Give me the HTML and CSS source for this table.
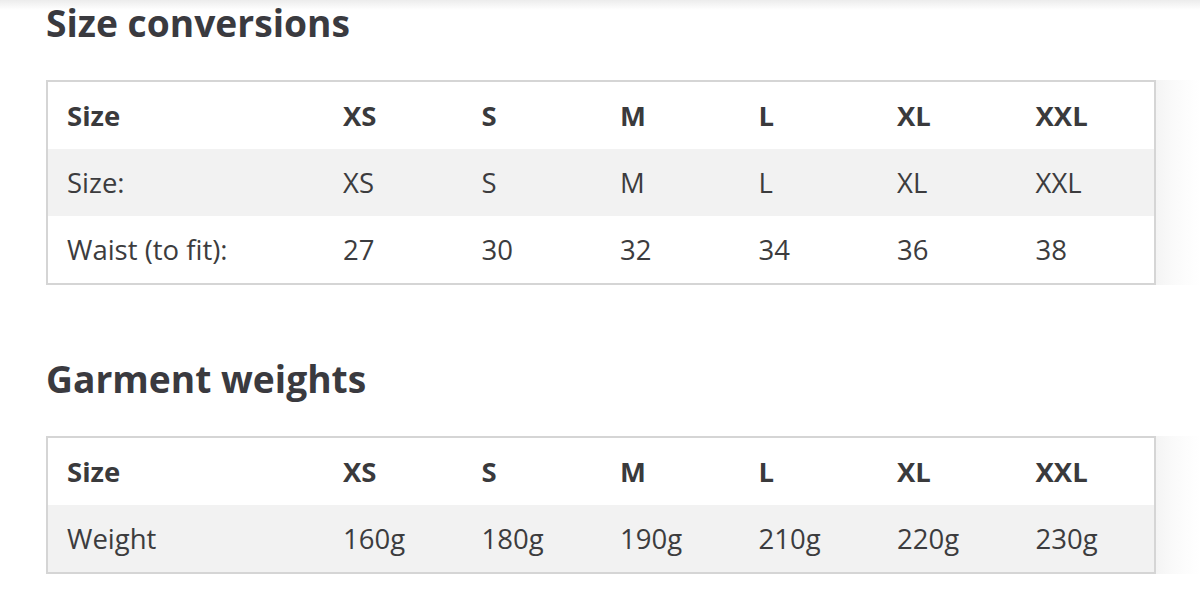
FILE: index.html
```html
<!DOCTYPE html>
<html lang="en">
<head>
<meta charset="utf-8">
<title>Size guide</title>
<link rel="stylesheet" href="styles.css">
</head>
<body>
<main class="page">
  <section class="section">
    <h2 class="title">Size conversions</h2>
    <div class="table-wrap">
      <table class="grid">
        <colgroup><col class="c-first"><col><col><col><col><col><col></colgroup>
        <thead>
          <tr><th>Size</th><th>XS</th><th>S</th><th>M</th><th>L</th><th>XL</th><th>XXL</th></tr>
        </thead>
        <tbody>
          <tr><td>Size:</td><td>XS</td><td>S</td><td>M</td><td>L</td><td>XL</td><td>XXL</td></tr>
          <tr><td>Waist (to fit):</td><td>27</td><td>30</td><td>32</td><td>34</td><td>36</td><td>38</td></tr>
        </tbody>
      </table>
      <div class="fade"></div>
    </div>
  </section>
  <section class="section second">
    <h2 class="title">Garment weights</h2>
    <div class="table-wrap">
      <table class="grid">
        <colgroup><col class="c-first"><col><col><col><col><col><col></colgroup>
        <thead>
          <tr><th>Size</th><th>XS</th><th>S</th><th>M</th><th>L</th><th>XL</th><th>XXL</th></tr>
        </thead>
        <tbody>
          <tr><td>Weight</td><td>160g</td><td>180g</td><td>190g</td><td>210g</td><td>220g</td><td>230g</td></tr>
        </tbody>
      </table>
      <div class="fade"></div>
    </div>
  </section>
</main>
</body>
</html>
```

FILE: styles.css
```css
html, body {
  margin: 0;
  padding: 0;
}
body {
  background: #fff linear-gradient(#ececec 0, #ffffff 10px) no-repeat;
  font-family: "Open Sans", "Liberation Sans", sans-serif;
  color: #3a3a3c;
}
.page {
  padding: 0 0 0 46px;
}
.section {
  display: flex;
  flex-direction: column;
}
.title {
  margin: 0;
  font-size: 37.2px;
  font-weight: 700;
  line-height: 46px;
  color: #3a3a3f;
}
.section .title {
  margin-bottom: 34px;
}
.second {
  margin-top: 71px;
}
.table-wrap {
  display: flex;
  align-items: stretch;
}
.grid {
  width: 1110px;
  table-layout: fixed;
  border-collapse: collapse;
  border: 2px solid #d5d5d5;
  font-size: 27.5px;
}
.c-first {
  width: 277px;
}
.grid th,
.grid td {
  height: 67px;
  padding: 0 0 0 19px;
  text-align: left;
  vertical-align: middle;
  white-space: nowrap;
  line-height: 30px;
}
.grid th {
  font-weight: 700;
  color: #3a3a3c;
}
.grid td {
  font-weight: 400;
  color: #3c3c3e;
}
.grid tbody tr:nth-child(odd) {
  background: #f2f2f2;
}
.fade {
  width: 44px;
  background: linear-gradient(90deg, #f4f4f4 0, #fafafa 40%, #ffffff 100%);
}
```
